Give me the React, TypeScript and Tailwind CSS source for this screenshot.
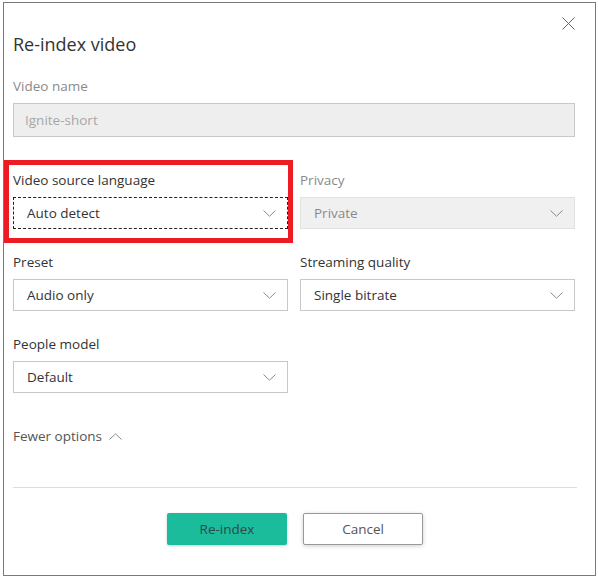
import React from "react";

function Chevron({ up = false }: { up?: boolean }) {
  return (
    <svg width="13" height="7" viewBox="0 0 13 7" aria-hidden className="shrink-0">
      <path
        d={up ? "M0.5 6.5 L6.5 0.8 L12.5 6.5" : "M0.5 0.5 L6.5 6.2 L12.5 0.5"}
        stroke="#8a8a8a"
        strokeWidth="1"
        fill="none"
      />
    </svg>
  );
}

function Field({
  label,
  value,
  disabled = false,
  focused = false,
}: {
  label: string;
  value: string;
  disabled?: boolean;
  focused?: boolean;
}) {
  return (
    <div className="flex flex-col">
      <span
        className={[
          "h-5 text-[13.5px] leading-5",
          disabled ? "text-[#8a8a8a]" : "text-[#333333]",
        ].join(" ")}
      >
        {label}
      </span>
      <div
        className={[
          "mt-[7px] flex h-8 items-center justify-between pl-[13px] pr-[11px] text-[13.5px]",
          focused
            ? "border border-dashed border-[#222222] text-[#333333]"
            : disabled
            ? "border border-[#e2e2e2] bg-[#f0f0f0] text-[#8a8a8a]"
            : "border border-[#c8c8c8] text-[#333333]",
        ].join(" ")}
      >
        <span>{value}</span>
        <Chevron />
      </div>
    </div>
  );
}

export default function App() {
  return (
    <div className="relative h-[580px] w-[598px] bg-white pl-[3px] pt-[2px] font-['Segoe_UI','Open_Sans',sans-serif]">
      <div className="relative flex h-[574px] w-[593px] flex-col border border-[#7a7a7a] pl-[9px] pr-[20px]">
        {/* Close */}
        <button className="absolute right-[20px] top-[14px] p-0" aria-label="Close">
          <svg width="13" height="13" viewBox="0 0 13 13" aria-hidden>
            <path d="M0.5 0.5 L12.5 12.5 M12.5 0.5 L0.5 12.5" stroke="#666666" strokeWidth="1" />
          </svg>
        </button>

        <h1 className="mt-[27px] text-[18px] leading-7 text-[#333333]">Re-index video</h1>

        <span className="mt-[18px] h-5 text-[13.5px] leading-5 text-[#8a8a8a]">Video name</span>
        <div className="mt-[7px] flex h-[34px] items-center border border-[#c8c8c8] bg-[#eeeeee] pl-[11px] text-[13.5px] text-[#a6a6a6]">
          Ignite-short
        </div>

        <div className="mt-[33px] grid grid-cols-2 gap-x-[12px] gap-y-[23px]">
          <Field label="Video source language" value="Auto detect" focused />
          <Field label="Privacy" value="Private" disabled />
          <Field label="Preset" value="Audio only" />
          <Field label="Streaming quality" value="Single bitrate" />
          <Field label="People model" value="Default" />
        </div>

        <div className="mt-[33px] flex items-center gap-[7px] text-[13.5px] leading-5 text-[#555555]">
          <span>Fewer options</span>
          <Chevron up />
        </div>

        <div className="mr-[-2px] mt-[41px] h-px bg-[#dddddd]" />

        <div className="mt-[25px] flex justify-center gap-4 pl-[2px]">
          <button className="h-8 w-[120px] rounded-[2px] bg-[#1abc9c] text-[13.5px] text-[#2f4a45] shadow-[0_1px_3px_rgba(0,0,0,0.2)]">
            Re-index
          </button>
          <button className="h-8 w-[120px] rounded-[2px] border border-[#999999] bg-white text-[13.5px] text-[#555555] shadow-[0_1px_4px_rgba(0,0,0,0.2)]">
            Cancel
          </button>
        </div>
      </div>

      {/* Annotation highlight */}
      <div className="pointer-events-none absolute left-[4px] top-[160px] h-[83px] w-[289px] border-[5px] border-[#ed1c24]" />
    </div>
  );
}
